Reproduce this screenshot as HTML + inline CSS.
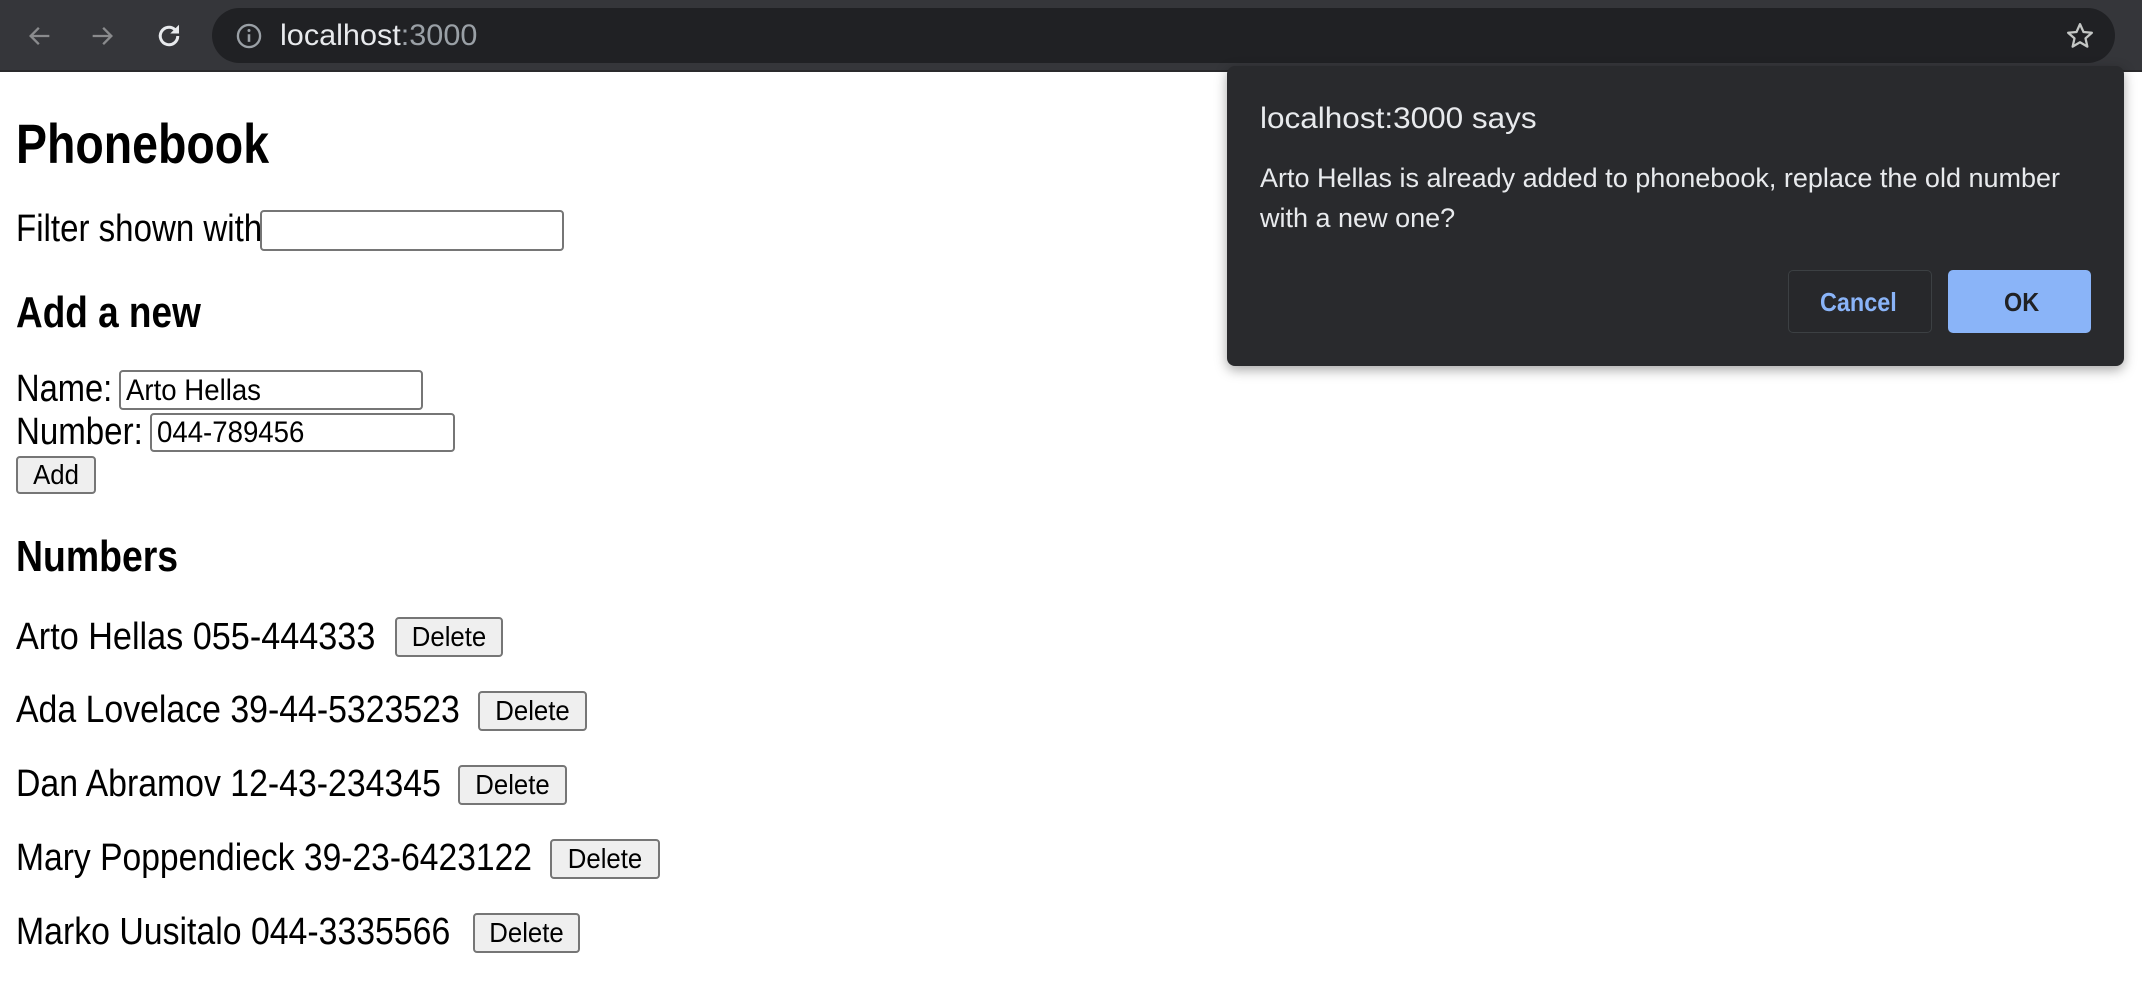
<!DOCTYPE html>
<html><head><meta charset="utf-8"><style>
*{margin:0;padding:0;box-sizing:border-box}
body{width:2142px;height:990px;overflow:hidden;background:#fff;position:relative;font-family:"Liberation Sans",Arial,sans-serif;color:#000}
.t{position:absolute;white-space:nowrap;line-height:1;transform-origin:left center;transform:scaleX(.89)}
.box{position:absolute;border:2px solid #767676;border-radius:4px;background:#fff}
.btn{position:absolute;border:2px solid #767676;border-radius:4px;background:#efefef}
.btn span{position:absolute;left:0;right:0;top:50%;transform:translateY(-50%) scaleX(.92);text-align:center;font-size:28px;line-height:1}
</style></head><body>
<div style="position:absolute;left:0;top:0;width:2142px;height:72px;background:#35363a;border-bottom:2px solid #2a2a2c"></div>
<div style="position:absolute;left:212px;top:8px;width:1903px;height:55px;border-radius:28px;background:#202124"></div>
<svg style="position:absolute;left:26px;top:22px" width="28" height="28" viewBox="0 0 24 24"><path d="M20 12H5M11 5l-7 7 7 7" fill="none" stroke="#8a8b8d" stroke-width="2"/></svg>
<svg style="position:absolute;left:88px;top:22px" width="28" height="28" viewBox="0 0 24 24"><path d="M4 12h15M13 5l7 7-7 7" fill="none" stroke="#8a8b8d" stroke-width="2"/></svg>
<svg style="position:absolute;left:154px;top:21px" width="30" height="30" viewBox="0 0 24 24"><path d="M19 12a7 7 0 1 1-2.2-5.1" fill="none" stroke="#e8eaed" stroke-width="2.4"/><path d="M20 3v7h-7z" fill="#e8eaed"/></svg>
<svg style="position:absolute;left:235px;top:22px" width="28" height="28" viewBox="0 0 24 24"><circle cx="12" cy="12" r="9.5" fill="none" stroke="#9aa0a6" stroke-width="2"/><path d="M12 10.5v6.5" stroke="#9aa0a6" stroke-width="2.2"/><circle cx="12" cy="7.3" r="1.3" fill="#9aa0a6"/></svg>
<div class="t" style="left:280px;top:21px;font-size:30px;color:#e8eaed;transform:scaleX(1.02)">localhost<span style="color:#9aa0a6">:3000</span></div>
<svg style="position:absolute;left:2065px;top:21px" width="30" height="30" viewBox="0 0 24 24"><path d="M12 2.5l2.8 6.3 6.7.6-5.1 4.5 1.5 6.6L12 17l-5.9 3.5 1.5-6.6-5.1-4.5 6.7-.6z" fill="none" stroke="#c4c7c5" stroke-width="1.8" stroke-linejoin="round"/></svg>

<div class="t" style="left:16px;top:116px;font-size:56px;font-weight:bold;transform:scaleX(.83)">Phonebook</div>
<div class="t" style="left:16px;top:210px;font-size:38px;transform:scaleX(.87)">Filter shown with</div>
<div class="box" style="left:260px;top:210px;width:304px;height:41px"></div>
<div class="t" style="left:16px;top:291px;font-size:44px;font-weight:bold;transform:scaleX(.84)">Add a new</div>
<div class="t" style="left:16px;top:370px;font-size:38px;transform:scaleX(.86)">Name:</div>
<div class="box" style="left:119px;top:370px;width:304px;height:40px"></div>
<div class="t" style="left:126px;top:376px;font-size:30px;transform:scaleX(.92)">Arto Hellas</div>
<div class="t" style="left:16px;top:413px;font-size:38px;transform:scaleX(.87)">Number:</div>
<div class="box" style="left:150px;top:413px;width:305px;height:39px"></div>
<div class="t" style="left:157px;top:418px;font-size:30px;transform:scaleX(.92)">044-789456</div>
<div class="btn" style="left:16px;top:456px;width:80px;height:38px"><span>Add</span></div>
<div class="t" style="left:16px;top:535px;font-size:44px;font-weight:bold;transform:scaleX(.85)">Numbers</div>

<div class="t" style="left:16px;top:618px;font-size:38px;transform:scaleX(.9)">Arto Hellas 055-444333</div>
<div class="btn" style="left:395px;top:617px;width:108px;height:40px"><span>Delete</span></div>
<div class="t" style="left:16px;top:691px;font-size:38px;transform:scaleX(.89)">Ada Lovelace 39-44-5323523</div>
<div class="btn" style="left:478px;top:691px;width:109px;height:40px"><span>Delete</span></div>
<div class="t" style="left:16px;top:765px;font-size:38px;transform:scaleX(.89)">Dan Abramov 12-43-234345</div>
<div class="btn" style="left:458px;top:765px;width:109px;height:40px"><span>Delete</span></div>
<div class="t" style="left:16px;top:839px;font-size:38px;transform:scaleX(.885)">Mary Poppendieck 39-23-6423122</div>
<div class="btn" style="left:550px;top:839px;width:110px;height:40px"><span>Delete</span></div>
<div class="t" style="left:16px;top:913px;font-size:38px;transform:scaleX(.89)">Marko Uusitalo 044-3335566</div>
<div class="btn" style="left:473px;top:913px;width:107px;height:40px"><span>Delete</span></div>

<div style="position:absolute;left:1227px;top:66px;width:897px;height:300px;background:#292a2d;border-radius:8px;box-shadow:0 4px 12px rgba(0,0,0,.35)"></div>
<div class="t" style="left:1260px;top:104px;font-size:30px;color:#e8eaed;transform:scaleX(1.05)">localhost:3000 says</div>
<div class="t" style="left:1260px;top:165px;font-size:27px;color:#e8eaed;transform:scaleX(1.0)">Arto Hellas is already added to phonebook, replace the old number</div>
<div class="t" style="left:1260px;top:205px;font-size:27px;color:#e8eaed;transform:scaleX(1.0)">with a new one?</div>
<div style="position:absolute;left:1788px;top:270px;width:144px;height:63px;border:1px solid #3c4043;border-radius:5px;background:#27282b"></div>
<div class="t" style="left:1820px;top:289px;font-size:26px;font-weight:bold;color:#8ab4f8;transform:scaleX(.9)">Cancel</div>
<div style="position:absolute;left:1948px;top:270px;width:143px;height:63px;border-radius:5px;background:#8ab4f8"></div>
<div class="t" style="left:2004px;top:289px;font-size:26px;font-weight:bold;color:#202124;transform:scaleX(.9)">OK</div>
</body></html>
